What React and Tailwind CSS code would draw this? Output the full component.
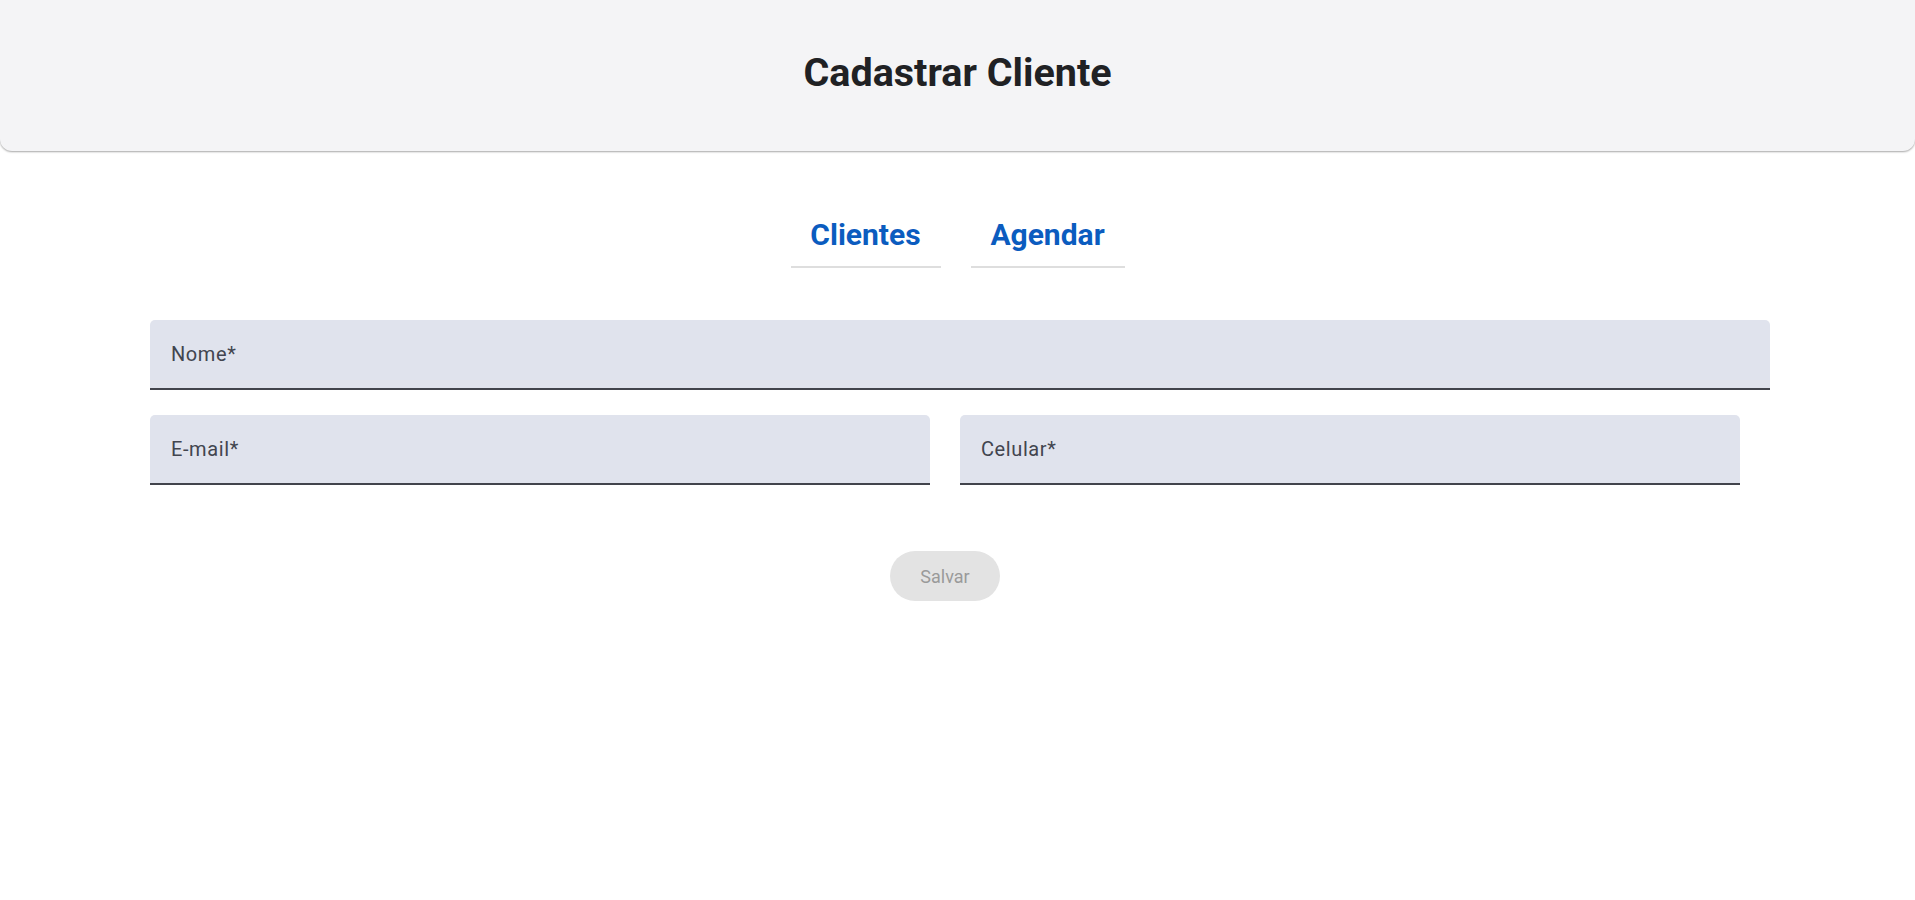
import React from "react";

const Field = ({ label, className = "" }) => (
  <div
    className={`h-[70px] bg-[#e0e3ed] rounded-t-[5px] border-b-[2px] border-[#42444c] flex items-center px-[21px] ${className}`}
  >
    <span className="text-[20px] tracking-[0.6px] text-[#42454f]">{label}</span>
  </div>
);

const App = () => {
  return (
    <div className="min-h-screen bg-white font-['Roboto',sans-serif]">
      <header className="h-[151px] pb-[5px] bg-[#f4f4f6] rounded-b-[12px] shadow-[0_1px_2px_rgba(0,0,0,0.35)] flex items-center justify-center">
        <h1 className="text-[39.5px] font-bold text-[#202124] leading-none">
          Cadastrar Cliente
        </h1>
      </header>

      <nav className="flex justify-center gap-[30px] mt-[57px]">
        <button className="w-[150px] h-[60px] pb-[6px] border-b-[2px] border-[#dedede] text-[30px] font-bold text-[#0b5cbf]">
          Clientes
        </button>
        <button className="w-[154px] h-[60px] pb-[6px] border-b-[2px] border-[#dedede] text-[30px] font-bold text-[#0b5cbf]">
          Agendar
        </button>
      </nav>

      <form className="px-[150px] mt-[52px]">
        <Field label="Nome*" className="w-[1620px]" />
        <div className="flex gap-[30px] mt-[25px]">
          <Field label="E-mail*" className="w-[780px]" />
          <Field label="Celular*" className="w-[780px]" />
        </div>
        <div className="flex mt-[66px] pl-[740px]">
          <button
            type="button"
            disabled
            className="w-[110px] h-[50px] rounded-full bg-[#e3e3e3] text-[18px] text-[#9a9a9a]"
          >
            Salvar
          </button>
        </div>
      </form>
    </div>
  );
};

export default App;
